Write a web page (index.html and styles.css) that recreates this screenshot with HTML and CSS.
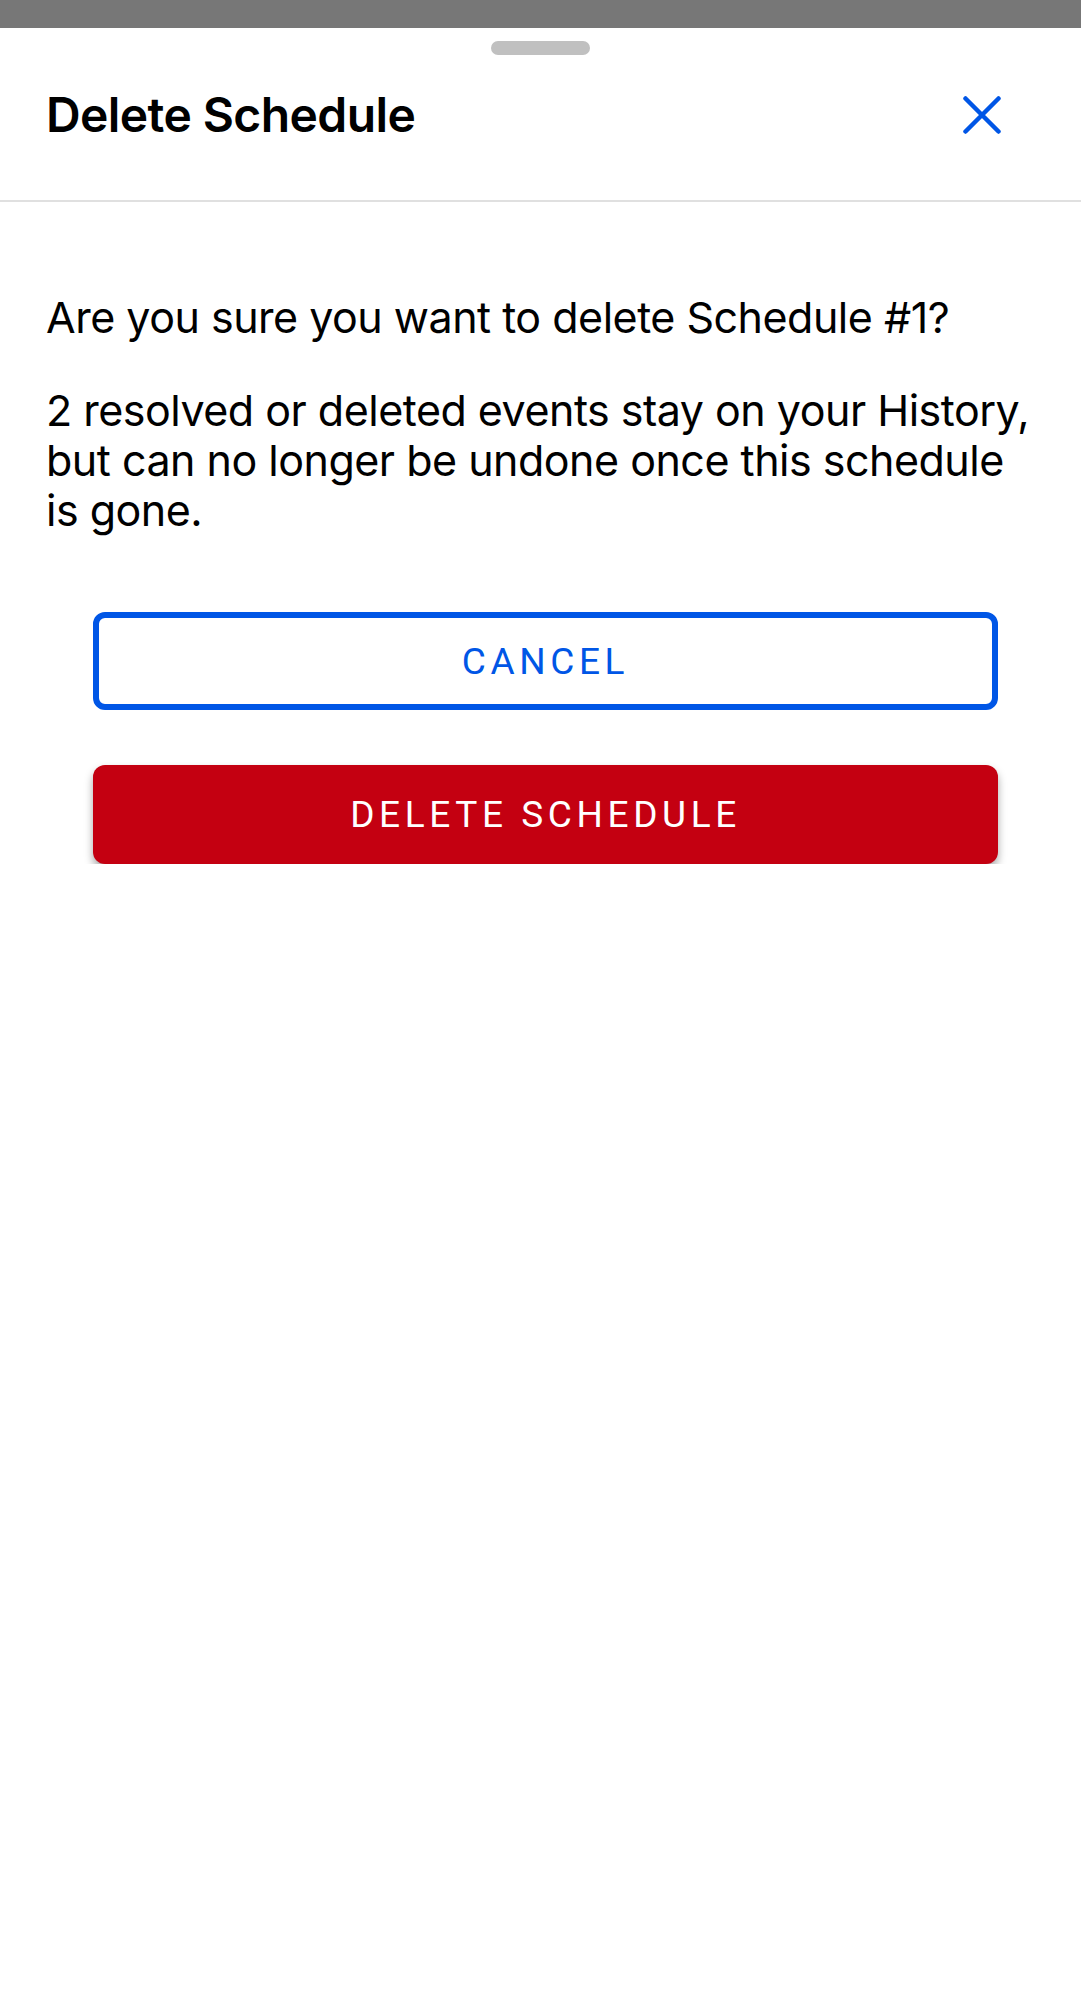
FILE: index.html
```html
<!DOCTYPE html>
<html>

<head>
	<title>Delete Schedule</title>
	<link rel="stylesheet" href="styles.css">
</head>

<body>
	<div class="status-bar"></div>

	<div class="sheet">
		<div class="handle-row">
			<div class="handle"></div>
		</div>

		<div class="sheet-header">
			<h2 class="sheet-title">Delete Schedule</h2>
			<button class="close-btn" aria-label="Close">
				<svg width="38" height="38" viewBox="0 0 38 38">
					<path d="M2.5 2.5 L35.5 35.5 M35.5 2.5 L2.5 35.5" stroke="#0056e6" stroke-width="4.5" stroke-linecap="round" fill="none" />
				</svg>
			</button>
		</div>

		<div class="sheet-body">
			<p class="message">Are you sure you want to delete Schedule #1?</p>
			<p class="message">2 resolved or deleted events stay on your History, but can no longer be undone once this schedule is gone.</p>

			<div class="actions">
				<button class="btn btn-outline">Cancel</button>
				<button class="btn btn-danger">Delete Schedule</button>
			</div>
		</div>
	</div>
</body>

</html>
```

FILE: styles.css
```css
body {
	margin: 0;
	padding: 0;
	background-color: #ffffff;
	font-family: Inter, "Noto Sans", sans-serif;
	color: #000000;
}

.status-bar {
	height: 28px;
	background-color: #777777;
}

.sheet {
	background-color: #ffffff;
}

.handle-row {
	display: flex;
	justify-content: center;
	padding-top: 13px;
}

.handle {
	width: 99px;
	height: 14px;
	border-radius: 7px;
	background-color: #c0c0c0;
}

.sheet-header {
	display: flex;
	justify-content: space-between;
	align-items: center;
	height: 40px;
	padding: 40px 80px 65px 46px;
	border-bottom: 2px solid #e0e0e0;
}

.sheet-title {
	margin: 0;
	font-size: 48px;
	font-weight: 600;
	line-height: 40px;
	letter-spacing: -0.6px;
}

.close-btn {
	display: flex;
	padding: 0;
	border: none;
	background: none;
	cursor: pointer;
}

.sheet-body {
	padding: 90px 46px 0 46px;
}

.message {
	margin: 0 0 43px 0;
	font-size: 43px;
	line-height: 50px;
	letter-spacing: -0.5px;
}

.message:last-of-type {
	margin-bottom: 0;
}

.actions {
	display: flex;
	flex-direction: column;
	gap: 55px;
	margin: 77px 37px 0 47px;
}

.btn {
	height: 98px;
	border-radius: 12px;
	font-family: Roboto, "Noto Sans", sans-serif;
	font-size: 37px;
	font-weight: 400;
	letter-spacing: 4.6px;
	text-transform: uppercase;
	cursor: pointer;
}

.btn-outline {
	border: 6px solid #0056e6;
	background-color: #ffffff;
	color: #0056e6;
}

.btn-danger {
	height: 99px;
	border: none;
	background-color: #c40011;
	color: #ffffff;
	box-shadow: 0 5px 8px rgba(0, 0, 0, 0.35);
}
```
